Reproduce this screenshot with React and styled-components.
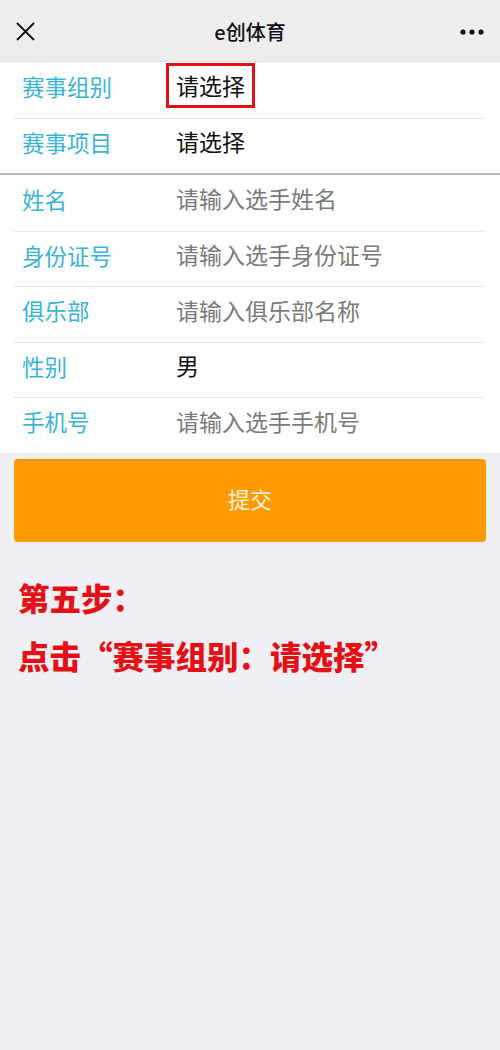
import styled, { createGlobalStyle } from "styled-components";

const GlobalStyle = createGlobalStyle`
  html, body {
    margin: 0;
    padding: 0;
    background: #efeff4;
  }
  body {
    font-family: "Noto Sans CJK SC", "Noto Sans", sans-serif;
  }
`;

const Page = styled.div`
  width: 500px;
  min-height: 1050px;
  background: #efeff4;
`;

const TopBar = styled.div`
  height: 62px;
  background: #ededed;
  display: flex;
  align-items: center;
  justify-content: space-between;
  padding: 2px 16px 0;
  box-sizing: border-box;
  border-bottom: 1px solid #e2e2e2;
`;

const Title = styled.div`
  font-size: 20px;
  font-weight: 500;
  color: #111;
`;

const IconBox = styled.div`
  width: 30px;
  height: 30px;
  display: flex;
  align-items: center;
  justify-content: ${({ $end }) => ($end ? "flex-end" : "flex-start")};
`;

const Section = styled.div`
  background: #fff;
  border-bottom: ${({ $thick }) => ($thick ? "2px solid #b9b9b9" : "none")};
`;

const Row = styled.div`
  box-sizing: border-box;
  height: 55.5px;
  display: flex;
  align-items: center;
  margin: 0 14px;
  padding: 0 0 8px 8px;
  border-top: ${({ $first }) => ($first ? "none" : "1px solid #e8e8e8")};
`;

const Label = styled.div`
  width: 154px;
  font-size: 22.5px;
  color: #39b4d6;
`;

const Value = styled.div`
  font-size: 23px;
  color: ${({ $placeholder }) => ($placeholder ? "#7a7a7a" : "#111")};
  padding: 2px 7px 3px;
  margin-left: -10px;
  border: 3px solid ${({ $marked }) => ($marked ? "#e01010" : "transparent")};
`;

const SubmitButton = styled.button`
  display: flex;
  align-items: center;
  justify-content: center;
  width: 472px;
  height: 83px;
  margin: 6px 14px 0;
  padding: 0 0 4px;
  border: none;
  border-radius: 4px;
  background: #ff9b00;
  color: #fff4e0;
  font-family: inherit;
  font-size: 22px;
`;

const Note = styled.div`
  padding: 26px 18px 0;
  color: #e60f16;
  font-size: 31.5px;
  font-weight: 900;
  line-height: 58px;
`;

const rowsTop = [
  { label: "赛事组别", value: "请选择", marked: true },
  { label: "赛事项目", value: "请选择" },
];

const rowsBottom = [
  { label: "姓名", value: "请输入选手姓名", placeholder: true },
  { label: "身份证号", value: "请输入选手身份证号", placeholder: true },
  { label: "俱乐部", value: "请输入俱乐部名称", placeholder: true },
  { label: "性别", value: "男" },
  { label: "手机号", value: "请输入选手手机号", placeholder: true },
];

const CloseIcon = () => (
  <svg width="19" height="19" viewBox="0 0 19 19">
    <path d="M1 1 L18 18 M18 1 L1 18" stroke="#111" strokeWidth="1.8" />
  </svg>
);

const MoreIcon = () => (
  <svg width="24" height="6" viewBox="0 0 24 6">
    <circle cx="3" cy="3" r="2.6" fill="#111" />
    <circle cx="12" cy="3" r="2.6" fill="#111" />
    <circle cx="21" cy="3" r="2.6" fill="#111" />
  </svg>
);

const FormRows = ({ rows }) =>
  rows.map((r, i) => (
    <Row key={r.label} $first={i === 0}>
      <Label>{r.label}</Label>
      <Value $placeholder={r.placeholder} $marked={r.marked}>
        {r.value}
      </Value>
    </Row>
  ));

export default function App() {
  return (
    <Page>
      <GlobalStyle />
      <TopBar>
        <IconBox>
          <CloseIcon />
        </IconBox>
        <Title>e创体育</Title>
        <IconBox $end>
          <MoreIcon />
        </IconBox>
      </TopBar>
      <Section $thick>
        <FormRows rows={rowsTop} />
      </Section>
      <Section>
        <FormRows rows={rowsBottom} />
      </Section>
      <SubmitButton>提交</SubmitButton>
      <Note>
        <div>第五步：</div>
        <div>点击“赛事组别：请选择”</div>
      </Note>
    </Page>
  );
}
